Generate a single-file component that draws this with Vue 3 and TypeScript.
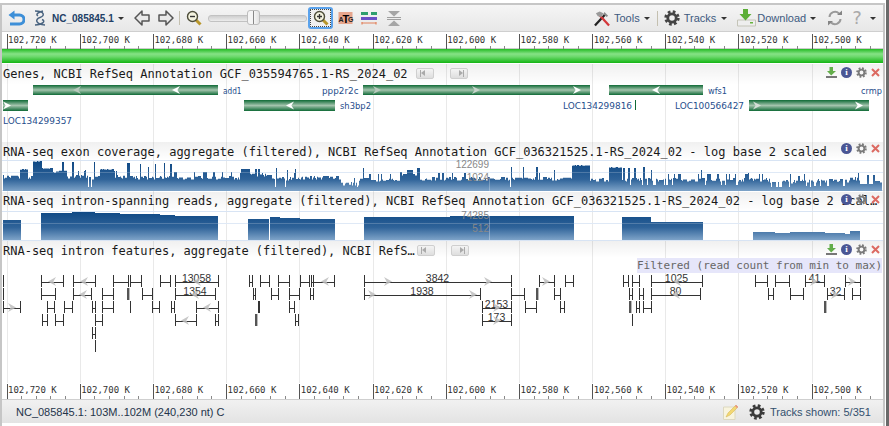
<script setup lang="ts">
type Feature = [number, number, number, string?]
type Arrow = [number, number, number]

const majorTicks = [7, 80.2, 153.4, 226.6, 299.8, 373, 446.3, 519.5, 592.7, 665.5, 738.7, 812]
const rulerLabels = ['102,720 K', '102,700 K', '102,680 K', '102,660 K', '102,640 K', '102,620 K', '102,600 K', '102,580 K', '102,560 K', '102,540 K', '102,520 K', '102,500 K']
const minorTicks: number[] = []
for (let i = 0; i < 12; i++) {
  for (let j = 1; j < 5; j++) minorTicks.push(majorTicks[i] + j * 14.64)
}

// gene bars, in page coordinates
const genes = [
  { x1: 33, x2: 218, y: 85, h: 10 },
  { x1: 363, x2: 590, y: 85, h: 10 },
  { x1: 609, x2: 703, y: 85, h: 10 },
  { x1: 3, x2: 28, y: 100, h: 11 },
  { x1: 244, x2: 335, y: 100, h: 11 },
  { x1: 749, x2: 869, y: 100, h: 11 },
  { x1: 635, x2: 636, y: 100, h: 10 }
]
const geneLabels = [
  { t: 'add1', x: 223, y: 94, w: 18.5 },
  { t: 'ppp2r2c', x: 322, y: 94, w: 36.5 },
  { t: 'wfs1', x: 708, y: 94, w: 19 },
  { t: 'crmp', x: 861, y: 94, w: 21 },
  { t: 'sh3bp2', x: 340, y: 109, w: 31 },
  { t: 'LOC134299816', x: 563, y: 109, w: 69 },
  { t: 'LOC100566427', x: 675, y: 109, w: 69 },
  { t: 'LOC134299357', x: 3, y: 124, w: 69 }
]
const geneArrows: { x: number; y: number; d: number; c: string }[] = [
  { x: 77, y: 90, d: -1, c: '#b9c9bd' },
  { x: 176, y: 90, d: -1, c: '#fff' },
  { x: 377, y: 90, d: 1, c: '#b9c9bd' },
  { x: 476, y: 90, d: 1, c: '#c8d4cb' },
  { x: 577, y: 90, d: 1, c: '#fff' },
  { x: 656, y: 90, d: -1, c: '#fff' },
  { x: 7, y: 105, d: 1, c: '#fff' },
  { x: 290, y: 105, d: -1, c: '#fff' },
  { x: 757, y: 105, d: 1, c: '#d5ded7' },
  { x: 859, y: 105, d: 1, c: '#fff' }
]

function arrowHead(x: number, y: number, d: number, w = 4, h = 4) {
  return `M${x + d * w} ${y}L${x - d * w} ${y - h}L${x - d * w * 0.35} ${y}L${x - d * w} ${y + h}Z`
}

// exon coverage outline
const exonBase: [number, number][] = [
  [3, 175], [20, 169], [28, 176], [33, 161], [42, 168], [53, 170], [62, 175], [92, 176], [100, 169], [113, 175],
  [128, 176], [240, 173], [270, 177], [300, 176], [340, 182], [358, 178], [400, 172], [420, 177], [572, 165],
  [590, 178], [609, 167], [622, 178], [770, 180], [800, 179], [850, 177], [870, 179]
]
const exonSpikes: [number, number, number][] = [
  [62, 64, 162], [72, 74, 162], [85, 86, 170], [94, 95, 162], [127, 130, 163], [140, 141, 164], [148, 149, 167],
  [155, 156, 164], [164, 165, 163], [170, 172, 164], [245, 250, 169], [255, 257, 169], [258, 260, 169], [276, 277, 168],
  [287, 288, 170], [295, 296, 169], [363, 364, 168], [407, 413, 170], [511, 512, 167], [523, 524, 167], [536, 538, 167],
  [554, 555, 170], [623, 625, 168], [628, 630, 168], [634, 636, 168], [643, 645, 167], [651, 652, 170], [701, 702, 170],
  [729, 730, 174], [748, 749, 173], [790, 791, 174], [804, 805, 174], [867, 869, 175]
]
const exonGaps = [88, 91, 275, 285, 357, 510, 771, 777, 789, 810]

function exonPath() {
  let d = 'M3 191'
  let seed = 7
  let top = 175
  for (let x = 3; x < 882; x++) {
    let base = 175
    for (const b of exonBase) if (x >= b[0]) base = b[1]
    seed = (seed * 137 + 59) % 1009
    // hold the value for a pixel or two, then jump
    if (seed % 3 !== 0) {
      const r = seed % 100
      top = base + (r % 6) * 0.7
      if (r > 90) top = base - 4
      if (x > 620 && r < 12) top = base + 7
    }
    if (base < 170) top = base + (seed % 3) * 0.4
    let final = top
    for (const s of exonSpikes) if (x >= s[0] && x < s[1]) final = s[2]
    if (exonGaps.includes(x)) final = 187
    d += `L${x} ${final}L${x + 1} ${final}`
  }
  return d + 'L882 191Z'
}
const exonD = exonPath()

const spanBars = [
  'M3 240V220H21V240Z',
  'M41 240V213H72V212H95V213H120V214H160V215H175V216H218V240Z',
  'M248 240V219H269V240ZM270 240V217H280V218H300V219H335V240Z',
  'M364 240V217H450V216H574V240Z',
  'M622 240V217H651V222H703V240Z',
  'M753 240V232H775V233H790V232H825V233H845V234H850V231H860V240Z'
]
const spanD = spanBars.join('')

const rowY = [282.5, 295.5, 308.5, 321.5, 334.5, 347.5]
const features: Feature[] = [
  [3, 3, 0], [41, 63, 0], [73, 95, 0], [113, 128, 0], [130, 141, 0], [160, 170, 0], [175, 218, 0, '13058'],
  [249, 252, 0], [260, 269, 0], [278, 289, 0], [300, 309, 0], [311, 313, 0], [313, 334, 0], [364, 511, 0, '3842'],
  [539, 554, 0], [565, 573, 0], [623, 628, 0], [632, 639, 0], [651, 702, 0, '1025'], [755, 767, 0], [775, 789, 0],
  [805, 824, 0, '41'], [845, 860, 0],
  [3, 3, 1], [41, 55, 1], [73, 91, 1], [102, 113, 1], [142, 152, 1], [175, 215, 1, '1354'], [253, 255, 1], [271, 278, 1],
  [289, 299, 1], [310, 313, 1], [364, 480, 1, '1938'], [511, 524, 1], [554, 560, 1], [629, 632, 1], [639, 643, 1],
  [651, 700, 1, '80'], [768, 773, 1], [790, 803, 1], [827, 844, 1, '32'], [852, 860, 1],
  [3, 20, 2], [47, 54, 2], [64, 72, 2], [92, 95, 2], [102, 113, 2], [130, 130, 2], [152, 159, 2], [171, 174, 2], [196, 218, 2],
  [258, 259, 2], [289, 294, 2], [482, 511, 2, '2153'], [525, 536, 2], [560, 564, 2], [636, 639, 2], [643, 651, 2],
  [42, 47, 3], [55, 63, 3], [95, 102, 3], [175, 196, 3], [215, 218, 3], [295, 298, 3], [482, 511, 3, '173'], [632, 632, 3],
  [92, 95, 4], [95, 95, 5]
]
const thickBars: [number, number][] = [[128, 1], [537, 1], [256, 3], [630, 2], [825, 2]]
const featureArrows: Arrow[] = [
  [52, 0, -1], [84, 0, -1], [197, 0, -1], [83, 1, -1], [195, 1, -1], [12, 2, 1], [207, 2, -1], [185, 3, -1],
  [325, 0, -1], [388, 0, 1], [488, 0, 1], [546, 0, 1], [372, 1, 1], [473, 1, 1], [497, 2, 1], [497, 3, 1],
  [677, 0, -1], [814, 0, 1], [852, 0, 1], [676, 1, -1], [835, 1, 1]
]
</script>

<template>
  <div class="page">
    <svg class="symbols" width="0" height="0" aria-hidden="true">
      <symbol id="gear" viewBox="0 0 16 16">
        <circle cx="8" cy="8" r="6.2" fill="none" stroke="currentColor" stroke-width="3" stroke-dasharray="2.6 2.27" />
        <circle cx="8" cy="8" r="4.2" fill="none" stroke="currentColor" stroke-width="2.8" />
      </symbol>
      <symbol id="block-arrow" viewBox="0 0 16 16">
        <path d="M1 8L8 1V5H15V11H8V15Z" fill="#e9e9e9" stroke="#555" stroke-width="1.5" stroke-linejoin="round" />
      </symbol>
      <linearGradient id="geneFill" x1="0" y1="0" x2="0" y2="1">
        <stop offset="0" stop-color="#0f6a36" />
        <stop offset="0.5" stop-color="#a3c4ad" />
        <stop offset="1" stop-color="#0f6a36" />
      </linearGradient>
      <linearGradient id="exonFill" gradientUnits="userSpaceOnUse" x1="0" y1="162" x2="0" y2="191">
        <stop offset="0" stop-color="#0f4985" />
        <stop offset="0.6" stop-color="#2f6399" />
        <stop offset="1" stop-color="#7ea3c8" />
      </linearGradient>
      <linearGradient id="spanFill" gradientUnits="userSpaceOnUse" x1="0" y1="212" x2="0" y2="240">
        <stop offset="0" stop-color="#0f4985" />
        <stop offset="0.55" stop-color="#2f6399" />
        <stop offset="1" stop-color="#7ea3c8" />
      </linearGradient>
    </svg>

    <div class="viewer">
      <div class="toolbar">
        <svg class="ic undo" width="17" height="16" viewBox="0 0 17 16">
          <path d="M4 5H11.5a4.5 4.5 0 0 1 0 9H2" fill="none" stroke="#3d8fd8" stroke-width="3" />
          <path d="M6.5 0.5L0.5 5L6.5 9.5Z" fill="#3d8fd8" />
        </svg>
        <svg class="ic helix" width="14" height="16" viewBox="0 0 14 16">
          <path d="M2 1C12 1 12 6 7 7.5C2 9 2 14 12 15" fill="none" stroke="#4a6480" stroke-width="1.5" />
          <path d="M10 1C6 2 2 4 5 6M9 9.5C13 11 10 14.5 2 15" fill="none" stroke="#4a6480" stroke-width="1.5" />
        </svg>
        <span class="seq-name">NC_085845.1</span>
        <i class="caret dark"></i>
        <svg class="ic prev" width="16" height="16"><use href="#block-arrow" /></svg>
        <svg class="ic next" width="16" height="16"><use href="#block-arrow" transform="matrix(-1 0 0 1 16 0)" /></svg>
        <i class="sep"></i>
        <svg class="ic zoom-out" width="16" height="16" viewBox="0 0 16 16">
          <line x1="9.5" y1="9.5" x2="14.5" y2="14.5" stroke="#b8962a" stroke-width="3" />
          <circle cx="6.5" cy="6.5" r="5" fill="#f4f3df" stroke="#4d4d3a" stroke-width="1.4" />
          <line x1="4" y1="6.5" x2="9" y2="6.5" stroke="#333" stroke-width="1.4" />
        </svg>
        <div class="slider"><div class="slider-track"></div><div class="slider-handle"></div></div>
        <div class="zoom-in">
          <svg width="16" height="16" viewBox="0 0 16 16">
            <line x1="9.5" y1="9.5" x2="14.5" y2="14.5" stroke="#b8962a" stroke-width="3" />
            <circle cx="6.5" cy="6.5" r="5" fill="#f4f3df" stroke="#4d4d3a" stroke-width="1.4" />
            <path d="M4 6.5H9M6.5 4V9" stroke="#333" stroke-width="1.3" />
          </svg>
        </div>
        <svg class="ic atg" width="16" height="14" viewBox="0 0 16 14">
          <rect x="0.5" y="1" width="14" height="12" fill="#e6a68e" />
          <text x="0.5" y="10.5" class="atg-side">A</text>
          <text x="4.5" y="11.5" class="atg-mid">T</text>
          <text x="10" y="10.5" class="atg-side">G</text>
        </svg>
        <svg class="ic colors" width="16" height="13" viewBox="0 0 16 13">
          <rect x="0" y="0" width="7" height="3" fill="#2f9e6e" /><rect x="10" y="0" width="6" height="3" fill="#2f9e6e" />
          <rect x="0" y="5" width="16" height="3" fill="#6a4fc6" />
          <path d="M1 10V12.5M1 11H15M15 10V12.5" stroke="#e2805a" stroke-width="1.2" fill="none" />
        </svg>
        <svg class="ic collapse" width="14" height="15" viewBox="0 0 14 15">
          <path d="M1 0H13L7 5.5Z" fill="#a5a5a5" /><path d="M1 15H13L7 9.5Z" fill="#a5a5a5" />
          <path d="M0 6.5H14M0 8.5H14" stroke="#8a8a8a" stroke-width="0.8" />
        </svg>

        <svg class="ic tools-ic" width="16" height="17" viewBox="0 0 17 17">
          <path d="M1 16L12 4" stroke="#222" stroke-width="2.4" />
          <path d="M16 16L6 5" stroke="#d3373a" stroke-width="2.4" />
          <path d="M2 3L6 1L10 3L8 7L4 6Z" fill="#9a9a9a" />
          <path d="M11 1.5L15 5.5L13.5 7L10 4Z" fill="#8b8b8b" />
        </svg>
        <span class="tb-text tools-text">Tools</span><i class="caret"></i>
        <i class="sep tools-sep"></i>
        <svg class="ic tracks-ic" width="16" height="16" style="color: #444"><use href="#gear" /></svg>
        <span class="tb-text tracks-text">Tracks</span><i class="caret"></i>
        <svg class="ic dl-ic" width="19" height="18" viewBox="0 0 19 18">
          <path d="M0.5 11H18.5V17H0.5Z" fill="#eeeeee" stroke="#c4c4b8" />
          <path d="M6 0H11V5H14.5L8.5 11.5L2.5 5H6Z" fill="#5cae37" />
          <rect x="13" y="13" width="3" height="1.5" fill="#67b33d" />
        </svg>
        <span class="tb-text dl-text">Download</span><i class="caret"></i>
        <svg class="ic refresh" width="16" height="16" viewBox="0 0 16 16">
          <path d="M2.5 7A5.5 5.5 0 0 1 12 3.5M13.5 9A5.5 5.5 0 0 1 4 12.5" fill="none" stroke="#9a9a9a" stroke-width="2" />
          <path d="M10 5H15V0.5ZM6 11H1V15.5Z" fill="#858585" />
        </svg>
        <span class="help">?</span><i class="caret help-caret"></i>
      </div>

      <svg class="ruler" width="881" height="17" viewBox="2 32 881 17">
        <g stroke="#555" stroke-width="1" shape-rendering="crispEdges">
          <line x1="2" y1="48.5" x2="883" y2="48.5" stroke="#ccc" />
          <line v-for="x in majorTicks" :key="x" :x1="x" y1="34" :x2="x" y2="49" />
          <line v-for="x in minorTicks" :key="'m' + x" :x1="x" y1="46" :x2="x" y2="49" stroke="#888" />
        </g>
        <text v-for="(t, i) in rulerLabels" :key="t" :x="majorTicks[i] + 1" y="43" class="ruler-text">{{ t }}</text>
      </svg>

      <div class="overview"></div>

      <div class="tracks">
        <svg class="gridlines" width="881" height="319" viewBox="2 64 881 319">
          <line v-for="x in majorTicks" :key="x" :x1="x" y1="64" :x2="x" y2="383" stroke="#e9e9e9" shape-rendering="crispEdges" />
        </svg>

        <section class="track genes">
          <div class="track-head">
            <span class="title">Genes, NCBI RefSeq Annotation GCF_035594765.1-RS_2024_02</span>
            <span class="pager"><i class="page-btn first"></i><i class="page-btn last"></i></span>
            <span class="track-tools">
              <svg width="11" height="11" viewBox="0 0 11 11"><path d="M3.5 0H7V4H10L5.2 8.5L1 4H3.5Z" fill="#63ad4a" /><rect x="0" y="9" width="11" height="2" fill="#777" /></svg>
              <i class="info">i</i>
              <svg class="tgear" width="11" height="11"><use href="#gear" /></svg>
              <svg width="9" height="9" viewBox="0 0 9 9"><path d="M1 1L8 8M8 1L1 8" stroke="#dc6a62" stroke-width="2" /></svg>
            </span>
          </div>
          <svg class="canvas" width="881" height="57" viewBox="2 85 881 57">
            <rect v-for="(g, i) in genes" :key="i" :x="g.x1" :y="g.y" :width="g.x2 - g.x1" :height="g.h" :fill="g.x2 - g.x1 < 2 ? '#0f6a36' : 'url(#geneFill)'" />
            <path v-for="(a, i) in geneArrows" :key="'a' + i" :d="arrowHead(a.x, a.y + (a.y > 100 ? 0.5 : 0), a.d)" :fill="a.c" />
            <text v-for="l in geneLabels" :key="l.t" :x="l.x" :y="l.y" :textLength="l.w" lengthAdjust="spacingAndGlyphs" class="gene-label">{{ l.t }}</text>
          </svg>
        </section>

        <section class="track exon">
          <div class="track-head">
            <span class="title">RNA-seq exon coverage, aggregate (filtered), NCBI RefSeq Annotation GCF_036321525.1-RS_2024_02 - log base 2 scaled</span>
            <span class="track-tools">
              <i class="info">i</i>
              <svg class="tgear" width="11" height="11"><use href="#gear" /></svg>
              <svg width="9" height="9" viewBox="0 0 9 9"><path d="M1 1L8 8M8 1L1 8" stroke="#dc6a62" stroke-width="2" /></svg>
            </span>
          </div>
          <svg class="canvas" width="881" height="32" viewBox="2 160 881 32">
            <path d="M2 160.5H883M2 172.5H883M2 190.5H883" stroke="#d8e4f4" shape-rendering="crispEdges" />
            <path :d="exonD" fill="url(#exonFill)" />
            <path d="M2 172.5H883" stroke="#fff" stroke-opacity="0.2" shape-rendering="crispEdges" />
            <path d="M489.5 160V191" stroke="#fff" stroke-opacity="0.25" shape-rendering="crispEdges" />
            <text x="489" y="168" class="scale">122699</text>
            <text x="489" y="181" class="scale">1024</text>
          </svg>
        </section>

        <section class="track span">
          <div class="track-head">
            <span class="title clipped">RNA-seq intron-spanning reads, aggregate (filtered), NCBI RefSeq Annotation GCF_036321525.1-RS_2024_02 - log base 2 scaled</span>
            <span class="track-tools">
              <i class="info">i</i>
              <svg class="tgear" width="11" height="11"><use href="#gear" /></svg>
              <svg width="9" height="9" viewBox="0 0 9 9"><path d="M1 1L8 8M8 1L1 8" stroke="#dc6a62" stroke-width="2" /></svg>
            </span>
          </div>
          <svg class="canvas" width="881" height="30" viewBox="2 211 881 30">
            <path d="M2 211.5H883M2 223.5H883M2 240.5H883" stroke="#d8e4f4" shape-rendering="crispEdges" />
            <path :d="spanD" fill="url(#spanFill)" />
            <path d="M2 223.5H883" stroke="#fff" stroke-opacity="0.2" shape-rendering="crispEdges" />
            <path d="M489.5 211V240" stroke="#fff" stroke-opacity="0.3" shape-rendering="crispEdges" />
            <text x="489" y="218.5" class="scale">74285</text>
            <text x="489" y="232" class="scale">512</text>
          </svg>
        </section>

        <section class="track introns">
          <div class="track-head">
            <span class="title short">RNA-seq intron features, aggregate (filtered), NCBI RefSeq Annotation GCF_036321525.1-RS_2024_02</span>
            <span class="pager"><i class="page-btn first"></i><i class="page-btn last"></i></span>
            <span class="track-tools">
              <svg width="11" height="11" viewBox="0 0 11 11"><path d="M3.5 0H7V4H10L5.2 8.5L1 4H3.5Z" fill="#63ad4a" /><rect x="0" y="9" width="11" height="2" fill="#777" /></svg>
              <i class="info">i</i>
              <svg class="tgear" width="11" height="11"><use href="#gear" /></svg>
              <svg width="9" height="9" viewBox="0 0 9 9"><path d="M1 1L8 8M8 1L1 8" stroke="#dc6a62" stroke-width="2" /></svg>
            </span>
          </div>
          <div class="filter-note">Filtered (read count from min to max)</div>
          <svg class="canvas" width="881" height="125" viewBox="2 258 881 125">
            <g stroke="#333" stroke-width="1" shape-rendering="crispEdges">
              <template v-for="(f, i) in features" :key="i">
                <line :x1="f[0] + 0.5" :y1="rowY[f[2]] - 7.5" :x2="f[0] + 0.5" :y2="rowY[f[2]] + 4.5" />
                <template v-if="f[1] !== f[0]">
                  <line :x1="f[1] + 0.5" :y1="rowY[f[2]] - 7.5" :x2="f[1] + 0.5" :y2="rowY[f[2]] + 4.5" />
                  <line :x1="f[0]" :y1="rowY[f[2]]" :x2="f[1]" :y2="rowY[f[2]]" />
                </template>
              </template>
            </g>
            <rect v-for="(t, i) in thickBars" :key="'t' + i" :x="t[0] - 1" :y="rowY[t[1]] - 7.5" width="2.4" height="12" fill="#555" />
            <template v-for="(f, i) in features" :key="'l' + i">
              <text v-if="f[3]" :x="(f[0] + f[1]) / 2" :y="rowY[f[2]] - 1" class="feature-label">{{ f[3] }}</text>
            </template>
            <path v-for="(a, i) in featureArrows" :key="'f' + i" :d="arrowHead(a[0], rowY[a[1]] - 1, a[2], 4, 4.5)" fill="#bdbdbd" fill-opacity="0.85" />
          </svg>
        </section>
      </div>

      <svg class="ruler bottom" width="881" height="16" viewBox="2 383 881 16">
        <g stroke="#555" stroke-width="1" shape-rendering="crispEdges">
          <line v-for="x in majorTicks" :key="x" :x1="x" y1="384" :x2="x" y2="399" />
          <line v-for="x in minorTicks" :key="'m' + x" :x1="x" y1="396" :x2="x" y2="399" stroke="#888" />
        </g>
        <text v-for="(t, i) in rulerLabels" :key="t" :x="majorTicks[i] + 1" y="393" class="ruler-text">{{ t }}</text>
      </svg>

      <div class="statusbar">
        <span class="status-loc">NC_085845.1: 103M..102M (240,230 nt) C</span>
        <svg class="note-ic" width="16" height="16" viewBox="0 0 16 16">
          <path d="M0.5 3H12V15.5H0.5Z" fill="#f8f4de" stroke="#dcd8c0" />
          <path d="M3 13L5 9L13 1L15 3L7 11Z" fill="#f3d872" stroke="#d0b050" stroke-width="0.5" />
          <path d="M13 1L15 3L14 4L12 2Z" fill="#e88a8a" />
        </svg>
        <svg class="status-gear" width="16" height="16" style="color: #3a3a3a"><use href="#gear" /></svg>
        <span class="status-tracks">Tracks shown: 5/351</span>
      </div>
    </div>
    <div class="edge"></div>
  </div>
</template>

<style>
html, body { margin: 0; background: #fff; overflow: hidden; }
</style>

<style scoped>
.page {
  display: flex;
  width: 889px;
  height: 426px;
  box-sizing: border-box;
  padding-top: 3px;
  font-family: "Liberation Sans", sans-serif;
  overflow: hidden;
  position: relative;
}
.symbols { position: absolute; }
.edge {
  width: 3px;
  margin-left: auto;
  margin-top: -3px;
  height: 426px;
  background: #6a6a6a;
}
.viewer {
  width: 881px;
  height: 421px;
  border: 2px solid #c6c6c6;
  border-bottom-width: 1px;
  border-top-width: 2px;
  display: flex;
  flex-direction: column;
  flex-shrink: 0;
}
.toolbar {
  height: 26px;
  flex-shrink: 0;
  display: flex;
  align-items: center;
  background: linear-gradient(#f5f5f5, #e7e7e7);
  border-bottom: 1px solid #cfcfcf;
}
.ic { flex-shrink: 0; }
.undo { margin-left: 6px; }
.helix { margin-left: 8px; }
.seq-name {
  margin-left: 5px;
  width: 61px;
  font-size: 10px;
  font-weight: bold;
  color: #223f66;
  white-space: nowrap;
}
.caret {
  display: block;
  width: 0;
  height: 0;
  margin-left: 4px;
  border: 3px solid transparent;
  border-top: 3px solid #333;
  border-bottom: 0;
  flex-shrink: 0;
}
.caret.dark { margin-left: 5px; }
.prev { margin-left: 10px; }
.next { margin-left: 8px; }
.sep {
  display: block;
  width: 1px;
  height: 14px;
  margin-left: 5px;
  background: #c4c0b0;
}
.zoom-out { margin-left: 6px; }
.slider {
  position: relative;
  width: 99px;
  height: 16px;
  margin-left: 6px;
  flex-shrink: 0;
}
.slider-track {
  position: absolute;
  left: 0;
  right: 0;
  top: 5px;
  border: 1px solid #c2c2c2;
  border-radius: 3px;
  background: linear-gradient(#cfcfcf, #ececec);
  box-sizing: border-box;
  height: 7px;
}
.slider-handle {
  position: absolute;
  left: 39px;
  top: 0;
  width: 13px;
  height: 15px;
  box-sizing: border-box;
  border: 1px solid #bdbdbd;
  border-radius: 3px;
  background: linear-gradient(90deg, #f5f5f5 0, #f5f5f5 5px, #888 5px, #888 6px, #f5f5f5 6px, #e2e2e2);
}
.zoom-in {
  box-sizing: border-box;
  width: 25px;
  height: 22px;
  margin-left: 1px;
  border: 2px solid #5aa2ec;
  border-radius: 3px;
  display: flex;
  align-items: center;
  justify-content: center;
  outline: 1px dotted #444;
  outline-offset: -3px;
  background: #f0f0f0;
  flex-shrink: 0;
}
.atg { margin-left: 5px; }
.atg-side { font: bold 7px "Liberation Sans", sans-serif; fill: #222; }
.atg-mid { font: bold 11px "Liberation Sans", sans-serif; fill: #000; }
.colors { margin-left: 7px; }
.collapse { margin-left: 10px; }
.tools-ic { margin-left: 193px; }
.tb-text {
  font-size: 11px;
  color: #3d5a80;
  white-space: nowrap;
}
.tools-text { margin-left: 4px; }
.tools-sep { margin-left: 7px; height: 15px; }
.tracks-ic { margin-left: 6px; }
.tracks-text { margin-left: 4px; }
.tracks-text + .caret { margin-left: 5px; }
.dl-ic { margin-left: 10px; }
.dl-text { margin-left: 1px; }
.refresh { margin-left: 11px; }
.help {
  margin-left: 9px;
  font: 18px "DejaVu Sans", sans-serif;
  color: #aaa;
  line-height: 18px;
}
.help-caret { margin-left: 8px; }
.ruler { display: block; flex-shrink: 0; background: #fff; }
.ruler-text {
  font: 9px "DejaVu Sans Mono", monospace;
  fill: #333;
}
.overview {
  height: 14px;
  flex-shrink: 0;
  margin-bottom: 1px;
  background: linear-gradient(#23bb23, #86e286 35%, #6cd96c 55%, #14b514);
}
.tracks {
  position: relative;
  height: 319px;
  flex-shrink: 0;
  overflow: hidden;
}
.gridlines { position: absolute; left: 0; top: 0; }
.track { position: relative; }
.track.genes { height: 78px; }
.track.exon { height: 50px; }
.track.span { height: 49px; }
.track.introns { height: 142px; }
.track-head {
  position: relative;
  display: flex;
  align-items: flex-start;
  box-sizing: border-box;
  background: linear-gradient(rgba(0, 0, 0, 0.06), rgba(0, 0, 0, 0));
}
.genes .track-head { height: 21px; padding-top: 3px; }
.exon .track-head { height: 18px; padding-top: 3px; }
.span .track-head { height: 19px; padding-top: 2px; }
.introns .track-head { height: 17px; padding-top: 3px; }
.title {
  margin-left: 1px;
  font: 12px/14px "DejaVu Sans Mono", monospace;
  color: #1a1a1a;
  white-space: nowrap;
}
.clipped {
  width: 876px;
  overflow: hidden;
  text-overflow: ellipsis;
}
.short {
  width: 412px;
  overflow: hidden;
  text-overflow: ellipsis;
  flex-shrink: 0;
}
.pager {
  display: flex;
  gap: 16px;
  margin-left: 2px;
  margin-top: 1px;
}
.genes .pager { margin-left: 8px; margin-top: 1px; }
.page-btn {
  position: relative;
  display: block;
  width: 18px;
  height: 11px;
  box-sizing: border-box;
  border: 1px solid #cfcfcf;
  border-radius: 2px;
  background: linear-gradient(#f4f4f4, #dedede);
}
.page-btn::before {
  content: "";
  position: absolute;
  top: 1px;
  width: 0;
  height: 0;
  border: 3.5px solid transparent;
}
.page-btn::after {
  content: "";
  position: absolute;
  top: 1px;
  width: 1px;
  height: 7px;
  background: #aaa;
}
.first::before { left: 4px; border-left: 0; border-right: 4px solid #aaa; }
.first::after { left: 3px; }
.last::before { left: 8px; border-right: 0; border-left: 4px solid #aaa; }
.last::after { left: 12px; }
.track-tools {
  position: absolute;
  right: 3px;
  top: 3px;
  display: flex;
  align-items: center;
  gap: 4px;
}
.exon .track-tools { top: 1px; }
.span .track-tools { top: 2px; }
.info {
  display: block;
  width: 11px;
  height: 11px;
  border-radius: 50%;
  background: #4a5694;
  color: #fff;
  font: bold 9px/11px "Liberation Serif", serif;
  text-align: center;
}
.tgear { color: #7a7a7a; }
.canvas { display: block; position: relative; overflow: visible; }
.gene-label {
  font: 9px "DejaVu Sans", sans-serif;
  fill: #1f4e8c;
}
.scale {
  font: 10px "Liberation Sans", sans-serif;
  fill: #888;
  text-anchor: end;
}
.filter-note {
  position: absolute;
  right: 1px;
  top: 17px;
  width: 245px;
  height: 15px;
  background: #e6e6fa;
  color: #666;
  font: 11px/15px "DejaVu Sans Mono", monospace;
  white-space: nowrap;
  z-index: 1;
}
.feature-label {
  font: 10.5px "Liberation Sans", sans-serif;
  fill: #333;
  text-anchor: middle;
}
.statusbar {
  height: 24px;
  flex-shrink: 0;
  display: flex;
  align-items: center;
  background: linear-gradient(#f1f1f1, #e3e3e3);
  border-top: 1px solid #cfcfcf;
  box-sizing: border-box;
  font-size: 11px;
}
.status-loc {
  margin-left: 14px;
  color: #24344a;
  white-space: nowrap;
}
.note-ic { margin-left: auto; }
.status-gear { margin-left: 10px; }
.status-tracks {
  margin-left: 5px;
  margin-right: 12px;
  color: #33506e;
  white-space: nowrap;
}
</style>
